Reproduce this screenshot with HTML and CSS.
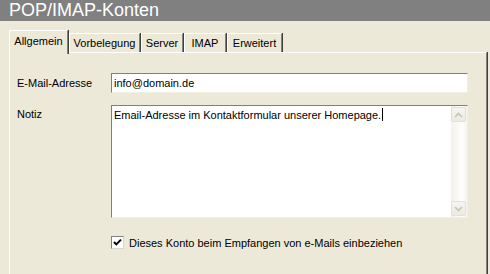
FILE: index.html
```html
<!DOCTYPE html>
<html lang="de">
<head>
    <meta charset="UTF-8">
    <title>POP/IMAP-Konten</title>
    <link rel="stylesheet" href="styles.css">
</head>
<body>
    <div class="titlebar">POP/IMAP-Konten</div>
    <div class="dialog">
        <div class="tabs">
            <div class="tab active">Allgemein</div>
            <div class="tab">Vorbelegung</div>
            <div class="tab">Server</div>
            <div class="tab">IMAP</div>
            <div class="tab">Erweitert</div>
        </div>
        <div class="panel">
            <div class="form-row">
                <label class="form-label">E-Mail-Adresse</label>
                <div class="textbox">info@domain.de</div>
            </div>
            <div class="form-row top">
                <label class="form-label note-label">Notiz</label>
                <div class="memo">
                    <div class="memo-text">Email-Adresse im Kontaktformular unserer Homepage.<span class="caret"></span></div>
                    <div class="scrollbar">
                        <div class="scroll-btn">
                            <svg width="9" height="6" viewBox="0 0 9 6"><polyline points="1,5 4.5,1.5 8,5" fill="none" stroke="#c6c4b8" stroke-width="1.6"/></svg>
                        </div>
                        <div class="scroll-track"></div>
                        <div class="scroll-btn">
                            <svg width="9" height="6" viewBox="0 0 9 6"><polyline points="1,1 4.5,4.5 8,1" fill="none" stroke="#c6c4b8" stroke-width="1.6"/></svg>
                        </div>
                    </div>
                </div>
            </div>
            <div class="check-row">
                <span class="checkbox">
                    <svg width="11" height="11" viewBox="0 0 11 11"><polyline points="2,5 4.3,7.4 9,2.6" fill="none" stroke="#000" stroke-width="2"/></svg>
                </span>
                <span>Dieses Konto beim Empfangen von e-Mails einbeziehen</span>
            </div>
        </div>
    </div>
</body>
</html>
```

FILE: styles.css
```css
body {
    margin: 0;
    background-color: #ece9d8;
    font-family: "Liberation Sans", Arial, sans-serif;
    font-size: 11px;
    color: #000;
    overflow: hidden;
}
.titlebar {
    height: 21px;
    line-height: 21px;
    background-color: #808080;
    color: #fff;
    font-size: 18px;
    padding-left: 9px;
}
.dialog {
    padding: 9px 3px 0 9px;
}
.tabs {
    display: flex;
    align-items: flex-end;
    height: 22px;
    position: relative;
    z-index: 1;
}
.tab {
    height: 19px;
    line-height: 18px;
    text-align: center;
    border-top: 1px solid #fff;
    border-left: 1px solid #fff;
    border-right: 1px solid #808080;
    box-shadow: 1px 0 0 #404040;
    margin-right: 1px;
    box-sizing: border-box;
}
.tab:nth-child(1) { width: 59px; }
.tab:nth-child(2) { width: 71px; }
.tab:nth-child(3) { width: 42px; }
.tab:nth-child(4) { width: 42px; }
.tab:nth-child(5) { width: 55px; }
.tab.active {
    height: 24px;
    margin-bottom: -2px;
    padding-top: 1px;
    background-color: #ece9d8;
}
.panel {
    border-top: 1px solid #fff;
    border-left: 1px solid #fff;
    border-right: 1px solid #808080;
    box-shadow: 1px 0 0 #404040;
    padding: 20px 18px 0 7px;
    height: 222px;
    box-sizing: border-box;
}
.form-row {
    display: flex;
    align-items: center;
    margin-bottom: 12px;
}
.form-row.top {
    align-items: flex-start;
}
.form-label {
    width: 94px;
    flex-shrink: 0;
}
.note-label {
    padding-top: 3px;
}
.textbox {
    flex: 1;
    height: 20px;
    line-height: 18px;
    padding: 0 2px;
    background-color: #fff;
    border: 1px solid;
    border-color: #7f7f7f #f1efe2 #f1efe2 #7f7f7f;
    box-sizing: border-box;
}
.memo {
    flex: 1;
    height: 113px;
    display: flex;
    background-color: #fff;
    border: 1px solid;
    border-color: #7f7f7f #f1efe2 #f1efe2 #7f7f7f;
    box-sizing: border-box;
}
.memo-text {
    flex: 1;
    padding: 2px 2px;
    line-height: 14px;
}
.caret {
    display: inline-block;
    width: 1px;
    height: 13px;
    background-color: #000;
    vertical-align: -2px;
    margin-left: 1px;
}
.scrollbar {
    width: 15px;
    display: flex;
    flex-direction: column;
    padding: 1px 1px 1px 0;
    background: linear-gradient(to right, #f3f1ea, #fefefd 70%, #f4f3ee);
}
.scroll-btn {
    height: 15px;
    border: 1px solid #e3e1d7;
    border-radius: 2px;
    background: linear-gradient(to bottom, #f6f5f0, #ebeae3);
    display: flex;
    align-items: center;
    justify-content: center;
    box-sizing: border-box;
}
.scroll-track {
    flex: 1;
}
.check-row {
    display: flex;
    align-items: center;
    gap: 5px;
    margin-top: 18px;
    padding-left: 94px;
}
.checkbox {
    width: 13px;
    height: 13px;
    border: 1px solid;
    border-color: #808080 #d8d6cc #d8d6cc #808080;
    background-color: #fff;
    box-sizing: border-box;
    display: flex;
    align-items: center;
    justify-content: center;
}
```
